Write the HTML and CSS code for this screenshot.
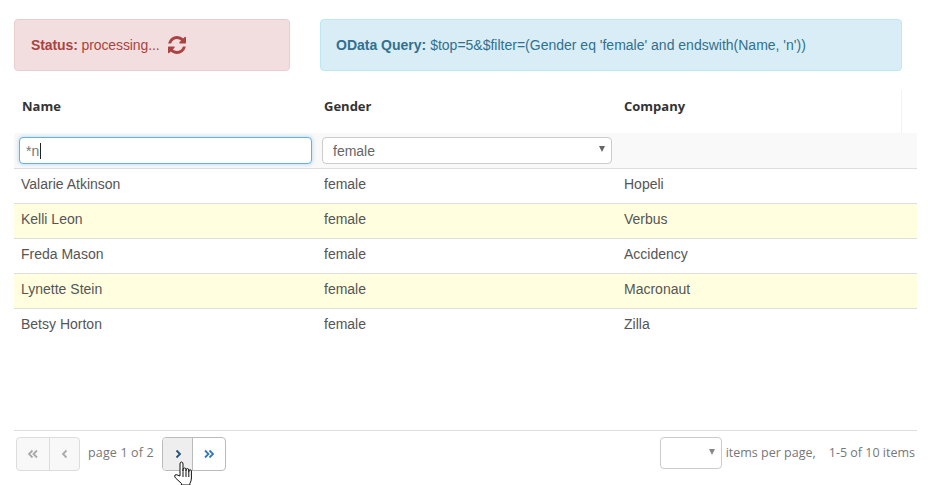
FILE: index.html
```html
<!DOCTYPE html>
<html lang="en">
  <head>
    <meta charset="UTF-8" />
    <meta name="viewport" content="width=device-width, initial-scale=1.0" />
    <title>OData grid</title>
    <link rel="stylesheet" href="styles.css">
  </head>

  <body>
    <div class="alerts">
      <div class="alert alert-status">
        <span class="status-text"><strong>Status:</strong> processing...</span>
        <svg class="spin-icon" viewBox="0 0 1536 1536" width="18" height="18">
          <path fill="currentColor" d="M1511 928q0 5-1 7-64 268-268 434.500t-478 166.500q-146 0-282.500-55t-243.500-157l-129 129q-19 19-45 19t-45-19-19-45v-448q0-26 19-45t45-19h448q26 0 45 19t19 45-19 45l-137 137q71 66 161 102t187 36q134 0 250-65t186-179q11-17 53-117 8-23 30-23h192q13 0 22.500 9.500t9.500 22.500zm25-800v448q0 26-19 45t-45 19h-448q-26 0-45-19t-19-45 19-45l138-138q-148-137-349-137-134 0-250 65t-186 179q-11 17-53 117-8 23-30 23h-199q-13 0-22.500-9.500t-9.500-22.500v-7q65-268 270-434.500t480-166.500q146 0 284 55.500t245 156.500l130-129q19-19 45-19t45 19 19 45z"/>
        </svg>
      </div>
      <div class="alert alert-query">
        <span><strong>OData Query:</strong> $top=5&amp;$filter=(Gender eq 'female' and endswith(Name, 'n'))</span>
      </div>
    </div>

    <div class="grid">
      <div class="row head-row">
        <div class="cell">Name</div>
        <div class="cell">Gender</div>
        <div class="cell">Company</div>
      </div>
      <div class="filter-row">
        <div class="fake-input">*n<span class="caret"></span></div>
        <div class="fake-select">
          female
          <span class="arrow"></span>
        </div>
      </div>
      <div class="row body-row"><div class="cell">Valarie Atkinson</div><div class="cell">female</div><div class="cell">Hopeli</div></div>
      <div class="row body-row alt"><div class="cell">Kelli Leon</div><div class="cell">female</div><div class="cell">Verbus</div></div>
      <div class="row body-row"><div class="cell">Freda Mason</div><div class="cell">female</div><div class="cell">Accidency</div></div>
      <div class="row body-row alt"><div class="cell">Lynette Stein</div><div class="cell">female</div><div class="cell">Macronaut</div></div>
      <div class="row body-row"><div class="cell">Betsy Horton</div><div class="cell">female</div><div class="cell">Zilla</div></div>
    </div>

    <div class="pager">
      <div class="btn-group disabled">
        <button type="button" class="page-btn wide">
          <svg viewBox="0 0 12 12" width="12" height="12"><path d="M5.500 2.500 2 6l3.500 3.500M10 2.500 6.500 6l3.500 3.500"/></svg>
        </button>
        <button type="button" class="page-btn">
          <svg viewBox="0 0 12 12" width="12" height="12"><path d="M7.500 2.500 4 6l3.500 3.500"/></svg>
        </button>
      </div>
      <span class="page-label">page 1 of 2</span>
      <div class="btn-group">
        <button type="button" class="page-btn hovered">
          <svg viewBox="0 0 12 12" width="12" height="12"><path d="M4.500 2.500 8 6l-3.500 3.500"/></svg>
        </button>
        <button type="button" class="page-btn wide">
          <svg viewBox="0 0 12 12" width="12" height="12"><path d="M2 2.500 5.500 6 2 9.500M6.500 2.500 10 6l-3.500 3.500"/></svg>
        </button>
      </div>
      <div class="pager-right">
        <div class="size-select"><span class="arrow"></span></div>
        <span class="per-page">items per page,</span>
        <span class="item-count">1-5 of 10 items</span>
      </div>
      <svg class="hand-cursor" viewBox="0 0 19 25" width="19" height="25">
        <path d="M6 15V3q0-2 1.500-2T9 3v7.500-2q0-1.500 1.500-1.500T12 8.500v2-1.500q0-1.400 1.400-1.400t1.400 1.400v2-1q0-1.200 1.300-1.200t1.300 1.200V17q0 3-1.500 5.500V24H7.500v-1.500L1.500 17q-1.500-2-.5-3t5 1z"/>
        <path d="M9 11v5M12 11v5M14.800 11v5"/>
      </svg>
    </div>
  </body>
</html>
```

FILE: styles.css
```css
body {
  margin: 0;
  padding: 19px 11px 0 14px;
  height: 485px;
  box-sizing: border-box;
  overflow: hidden;
  background-color: #fff;
  font-family: "Liberation Sans", Arial, sans-serif;
  font-size: 14px;
  color: #555;
}

.alerts {
  display: flex;
  gap: 30px;
  padding-right: 15px;
}

.alert {
  height: 52px;
  box-sizing: border-box;
  padding: 0 16px;
  display: flex;
  align-items: center;
  border: 1px solid;
  border-radius: 4px;
}

.alert-status {
  width: 276px;
  background-color: #f2dede;
  border-color: #ebccd1;
  color: #a94442;
}

.status-text {
  letter-spacing: -0.1px;
}

.spin-icon {
  margin-left: 8px;
}

.alert-query {
  flex: 1;
  padding-left: 15px;
  background-color: #d9edf7;
  border-color: #bce8f1;
  color: #31708f;
}

.grid {
  margin-top: 19px;
}

.row {
  display: grid;
  grid-template-columns: 308px 300px 1fr;
}

.cell {
  padding-left: 7px;
}

.row .cell:nth-child(2),
.row .cell:nth-child(3) {
  padding-left: 2px;
}

.head-row {
  height: 43px;
  box-sizing: border-box;
  padding-top: 7px;
  margin-right: 15px;
  border-right: 1px solid #f2f2f2;
  font-family: "Open Sans", sans-serif;
  font-size: 13px;
  font-weight: 700;
  color: #333;
}

.head-row .cell:first-child {
  padding-left: 8px;
}

.filter-row {
  height: 36px;
  display: flex;
  gap: 10px;
  padding: 4px 0 0 5px;
  box-sizing: border-box;
  background-color: #f9f9f9;
  border-bottom: 1px solid #ddd;
}

.fake-input,
.fake-select {
  height: 27px;
  box-sizing: border-box;
  border-radius: 4px;
  display: flex;
  align-items: center;
  background-color: #fff;
}

.fake-input {
  width: 293px;
  padding-left: 6px;
  border: 1px solid #66afe9;
  box-shadow: 0 0 4px rgba(102, 175, 233, 0.5);
  color: #777;
}

.caret {
  display: inline-block;
  width: 1px;
  height: 16px;
  margin-left: 1px;
  background-color: #222;
}

.fake-select {
  position: relative;
  width: 290px;
  padding-left: 10px;
  border: 1px solid #ccc;
  color: #666;
}

.arrow {
  position: absolute;
  right: 6px;
  top: 8px;
  border-style: solid;
  border-width: 6px 3.5px 0;
  border-color: #666 transparent transparent;
}

.body-row {
  height: 35px;
  box-sizing: border-box;
  align-items: center;
  padding-bottom: 4px;
  border-bottom: 1px solid #ddd;
}

.body-row:last-child {
  border-bottom-color: transparent;
}

.alt {
  background-color: #ffffe0;
}

.pager {
  position: relative;
  margin-top: 86px;
  height: 41px;
  border-top: 1px solid #ddd;
  padding: 6px 2px 0 2px;
  box-sizing: border-box;
  display: flex;
  align-items: flex-start;
  font-family: "Open Sans", sans-serif;
  font-size: 12.500px;
  color: #777;
}

.btn-group {
  display: flex;
  height: 34px;
  box-sizing: border-box;
  border: 1px solid #bbb;
  border-radius: 4px;
  overflow: hidden;
  background-color: #fff;
}

.btn-group.disabled {
  border-color: #ddd;
  background-color: #f8f8f8;
}

.page-btn {
  width: 29px;
  padding: 0;
  border: none;
  background: none;
  display: flex;
  align-items: center;
  justify-content: center;
}

.page-btn.wide {
  width: 32px;
}

.page-btn + .page-btn {
  box-sizing: content-box;
  border-left: 1px solid #bbb;
}

.disabled .page-btn + .page-btn {
  border-left-color: #ddd;
}

.page-btn svg {
  fill: none;
  stroke: #337ab7;
  stroke-width: 1.8;
}

.disabled .page-btn svg {
  stroke: #aaa;
}

.hovered {
  background-color: #eee;
}

.hovered svg {
  stroke: #23527c;
}

.page-label {
  width: 66px;
  margin: 7px 8px 0 8px;
  white-space: nowrap;
  letter-spacing: 0.15px;
}

.pager-right {
  margin-left: auto;
  display: flex;
  align-items: center;
  height: 32px;
}

.size-select {
  position: relative;
  width: 62px;
  height: 32px;
  box-sizing: border-box;
  border: 1px solid #ccc;
  border-radius: 4px;
}

.size-select .arrow {
  right: 6px;
  top: 11px;
  border-top-color: #888;
}

.per-page,
.item-count {
  margin-bottom: 1px;
}

.per-page {
  margin-left: 4px;
  margin-right: 13px;
}

.hand-cursor {
  position: absolute;
  left: 160px;
  top: 30px;
  fill: #fff;
  stroke: #111;
  stroke-width: 1;
}
```
